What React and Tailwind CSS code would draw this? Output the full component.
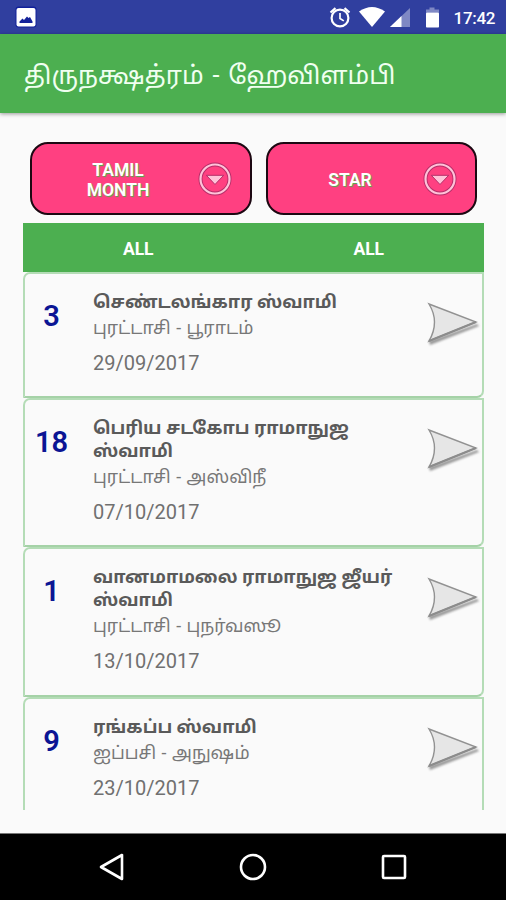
const entries = [
  {
    day: 3,
    name: ["செண்டலங்கார ஸ்வாமி"],
    star: "புரட்டாசி - பூராடம்",
    date: "29/09/2017",
    box: "h-[126px]",
  },
  {
    day: 18,
    name: ["பெரிய சடகோப ராமாநுஜ", "ஸ்வாமி"],
    star: "புரட்டாசி - அஸ்விநீ",
    date: "07/10/2017",
    box: "h-[149px]",
  },
  {
    day: 1,
    name: ["வானமாமலை ராமாநுஜ ஜீயர்", "ஸ்வாமி"],
    star: "புரட்டாசி - புநர்வஸூ",
    date: "13/10/2017",
    box: "h-[150px]",
  },
  {
    day: 9,
    name: ["ரங்கப்ப ஸ்வாமி"],
    star: "ஐப்பசி - அநுஷம்",
    date: "23/10/2017",
    box: "h-[150px]",
  },
];

function StatusBar() {
  return (
    <div className="flex h-[34px] shrink-0 items-start bg-[#303f9f] text-white">
      <svg className="ml-[15px] mt-[6px]" width="22" height="22" viewBox="0 0 22 22">
        <rect x="0.5" y="0.5" width="21" height="21" rx="3" fill="#10209a" />
        <rect x="1.5" y="2" width="19" height="18.5" rx="2" fill="#fff" />
        <path d="M4.5 17v-1.500l3-3 1.500 1.500 3-3.500 1.500 1.500 1.500-1 2.500 4.500v1.500z" fill="#14229a" />
      </svg>

      <svg className="ml-auto" width="188" height="34" viewBox="318 0 188 34">
        {/* alarm */}
        <g fill="none" stroke="#fff" strokeWidth="2.200">
          <circle cx="340" cy="18" r="8.400" />
          <path d="M340 13v5.500l3.800 2.400" strokeWidth="1.700" />
          <path d="M330.500 12.500l5-4.300M349.500 12.500l-5-4.300" />
        </g>
        {/* wifi */}
        <path d="M359 11.500q13-9 26 0L372 27z" fill="#fff" />
        {/* signal */}
        <path d="M410 8v19h-20z" fill="#7f88c4" />
        <path d="M401.500 16v11H390z" fill="#fff" />
        {/* battery */}
        <path d="M426 12.500V9.500h3.500V7.500h5v2h4.500v3z" fill="#7f88c4" />
        <rect x="426" y="12.500" width="13" height="15" rx="0.800" fill="#fff" />
        <text x="453.500" y="24" fill="#fff" fontSize="17" fontWeight="500" fontFamily="Roboto, sans-serif" textLength="42">
          17:42
        </text>
      </svg>
    </div>
  );
}

function FilterButton({ children, className }) {
  return (
    <button
      className={`flex h-[73px] items-center rounded-[18px] border-2 border-[#1c0812] bg-[#ff4081] text-[17.5px] font-semibold leading-[20px] text-white [text-shadow:1px_1px_1px_#4caf50] ${className}`}
    >
      {children}
      <svg className="ml-auto mr-[18px] shrink-0" width="34" height="34" viewBox="0 0 34 34">
        <circle cx="17" cy="17" r="14.500" fill="none" stroke="#b52d68" strokeWidth="4" />
        <circle cx="17" cy="17" r="14.500" fill="none" stroke="#ffc2d8" strokeWidth="2.200" />
        <path d="M8.300 13.300h17.400L17 22.500z" fill="#ffc2d8" stroke="#b52d68" strokeWidth="1" />
      </svg>
    </button>
  );
}

function Arrow() {
  return (
    <svg className="absolute right-[1px] top-[26px]" width="56" height="50" viewBox="0 0 56 50">
      <path d="M5 45l49-19-2-2-48 17z" fill="#999" className="blur-[1px]" />
      <path d="M4 4l47 18L4 41Q15 22 4 4z" fill="#e6e6e6" stroke="#929292" strokeWidth="1.400" />
      <path d="M4 41l47-19" stroke="#8c8c8c" strokeWidth="2.200" />
    </svg>
  );
}

function Entry({ entry }) {
  return (
    <div
      className={`relative flex shrink-0 rounded-tl-[7px] rounded-br-[7px] border-2 border-[#b4dcb6] border-b-[#a5d2a7] ${entry.box}`}
    >
      <div className="w-[53px] pt-[25px] text-center text-[29px] font-semibold leading-[34px] text-[#0b1594]">
        {entry.day}
      </div>
      <div className="ml-[15px] whitespace-nowrap pt-[16px] text-[#707070]">
        <div className="text-[17.8px] font-bold leading-[23px] text-[#5a5a5a]">
          {entry.name.map((line) => (
            <div key={line}>{line}</div>
          ))}
        </div>
        <div className="mt-[2px] text-[17.7px] leading-[27px] text-[#777] [word-spacing:1.2px]">{entry.star}</div>
        <div className="mt-[8px] text-[20px] leading-[26px]">{entry.date}</div>
      </div>
      <Arrow />
    </div>
  );
}

export default function App() {
  return (
    <main className="flex h-[900px] w-[506px] flex-col overflow-hidden bg-[#fafafa] font-[Roboto,'Noto_Sans_Tamil','Noto_Sans',sans-serif]">
      <StatusBar />

      <header className="z-10 flex h-[79px] shrink-0 items-center whitespace-nowrap bg-[#4caf50] pl-[24px] pt-[4px] text-[25.3px] text-[#f0fff0] shadow-[0_1px_4px_rgba(0,0,0,0.4)]">
        <h1 className="[word-spacing:2.5px]">திருநக்ஷத்ரம் - ஹேவிளம்பி</h1>
      </header>

      {/* filters */}
      <div className="mt-[29px] flex shrink-0 justify-between pl-[30px] pr-[29px]">
        <FilterButton className="w-[222px]">
          <span className="ml-[30px] w-[112px] pt-[2px] text-center">TAMIL MONTH</span>
        </FilterButton>
        <FilterButton className="w-[211px]">
          <span className="ml-[26px] w-[112px] pt-[2px] text-center">STAR</span>
        </FilterButton>
      </div>

      <div className="ml-[23px] mr-[22px] mt-[8px] grid h-[49px] shrink-0 grid-cols-2 items-center bg-[#4caf50] pt-[4px] text-center text-[17.5px] font-bold text-white">
        <div>ALL</div>
        <div>ALL</div>
      </div>

      {/* list */}
      <div className="ml-[23px] mr-[22px] flex h-[538px] shrink-0 flex-col overflow-hidden">
        {entries.map((entry) => (
          <Entry key={entry.date} entry={entry} />
        ))}
      </div>

      <nav className="mt-auto flex h-[67px] shrink-0 items-center justify-center gap-[113px] border-t border-[#777] bg-black">
        <svg width="28" height="30" viewBox="0 0 28 30" fill="none" stroke="#fff" strokeWidth="2.600" strokeLinejoin="round">
          <path d="M24 3v24L3 15z" />
        </svg>
        <svg width="28" height="30" viewBox="0 0 28 30" fill="none" stroke="#fff" strokeWidth="2.600">
          <circle cx="14" cy="15" r="12" />
        </svg>
        <svg width="28" height="30" viewBox="0 0 28 30" fill="none" stroke="#fff" strokeWidth="2.600">
          <rect x="3" y="4" width="22" height="22" rx="1" />
        </svg>
      </nav>
    </main>
  );
}
